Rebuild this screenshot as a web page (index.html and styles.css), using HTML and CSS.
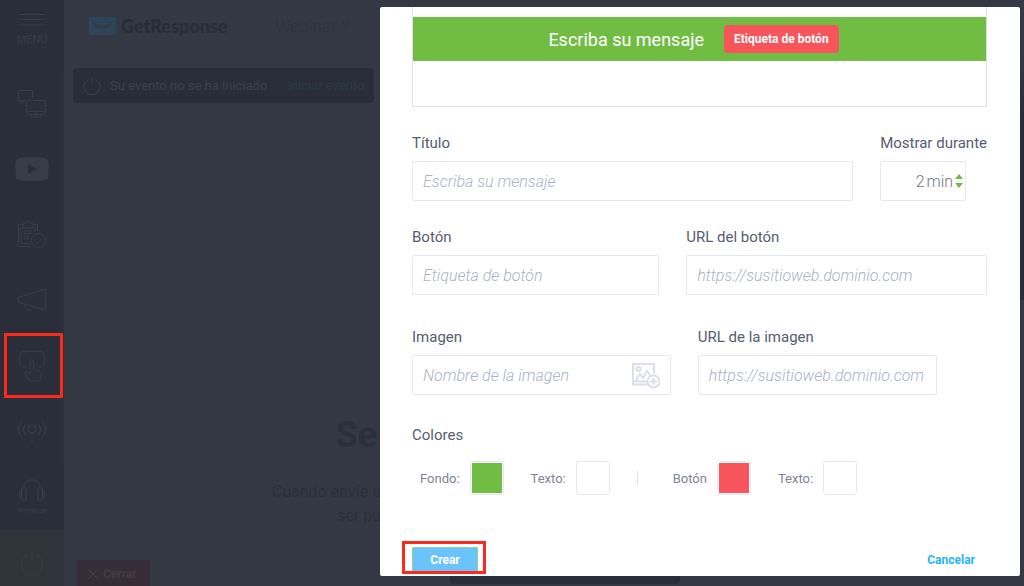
FILE: index.html
```html
<!DOCTYPE html>
<html lang="es">
<head>
<meta charset="UTF-8">
<meta name="viewport" content="width=device-width, initial-scale=1">
<title>GetResponse - Webinar</title>
<link rel="stylesheet" href="styles.css">
</head>

<body>
<div class="room">

  <aside class="sidebar">
    <button class="menu" type="button">
      <svg width="26" height="14" viewBox="0 0 26 14"><path d="M0 1.500h26M0 6.500h26M0 12h26"/></svg>
      MENÚ
    </button>

    <nav class="tools">
      <a href="#screen" aria-label="Pantalla">
        <svg width="30" height="30" viewBox="0 0 30 30"><path d="M8 11.500H1.500v-10h14V9M2 14h5M4 12v2M12 11.500h14.500a2 2 0 0 1 2 2v10a2 2 0 0 1-2 2h-15a2 2 0 0 1-2-2v-10a2 2 0 0 1 2-2zM9.500 22.500h19M19 23v5M13 28h12"/></svg>
      </a>
      <a href="#video" aria-label="Video">
        <svg class="solid" width="34" height="24" viewBox="0 0 34 24"><path d="M6 .5Q17-.5 28 .5q5 .5 5.500 5 .5 6.500 0 13-.5 4.500-5.500 5-11 1-22 0-5-.5-5.500-5-.5-6.500 0-13Q1 1 6 .5zM13 7v10l9-5z"/></svg>
      </a>
      <a href="#survey" aria-label="Encuesta">
        <svg width="30" height="30" viewBox="0 0 30 30"><path d="M6 4.500H1.500v22h12M16 4.500h4.500V11M6 8H4v15.500h9M16 7h2v5M6 3h3a2 2 0 0 1 4 0h3v5H6zM7 11h8M7 13.500h8M7 16h5M7 18.500h5"/><circle cx="21.500" cy="20.500" r="7"/><path d="M17.500 20.500l3 3 5-5.500"/></svg>
      </a>
      <a href="#announce" aria-label="Anuncio">
        <svg width="30" height="24" viewBox="0 0 30 24"><path d="M1 9.500L28.500 1v21L1 14zM8 16.500c-1 7 8 7 9 2.500"/></svg>
      </a>
      <a class="current" href="#cta" aria-label="Llamada a la acción">
        <svg width="26" height="32" viewBox="0 0 26 32"><path d="M7 17H4q-3-1-3-4V5q0-3 3-3.500h18q3 .5 3 3.500v8q0 3-3 4h-3"/><path d="M11 24V11.500q0-2 1.500-2t2 2V19l7 2.500q1.500.5 1 2.500l-1.500 7H11l-6-8q0-2 2-1.500z"/></svg>
      </a>
      <a href="#live" aria-label="En directo">
        <svg width="30" height="26" viewBox="0 0 30 26"><circle cx="15" cy="11" r="4"/><path d="M15 15v10M9 5q-5 6 0 12M21 5q5 6 0 12M5.500 1.500q-8 9.500 0 19M24.500 1.500q8 9.500 0 19"/></svg>
      </a>
    </nav>

    <a class="webinar" href="#webinar">
      <svg width="28" height="22" viewBox="0 0 28 22"><path d="M6 9C6-2 22-2 22 9M3.500 9H8v12H3.500zM20 9h4.500v12H20zM3.500 11L1 15l2.500 4M24.500 11l2.500 4-2.500 4"/></svg>
      Webinar
    </a>
    <a class="power" href="#exit" aria-label="Salir">
      <svg width="24" height="26" viewBox="0 0 24 26"><path d="M12 1v11M7.500 4a10.500 10.500 0 1 0 9 0"/></svg>
    </a>
  </aside>

  <main class="stage">
    <header class="topbar">
      <a class="brand" href="#home">
        <svg width="27" height="18" viewBox="0 0 27 18"><rect width="27" height="18" rx="1" fill="#2c4558"/><path d="M2.500 2c4 14 18 14 22 0-5 9-17 9-22 0z" fill="#353943"/></svg>
        GetResponse
      </a>
      <span class="title">Webinar Y</span>
    </header>

    <div class="notice">
      <svg width="18" height="20" viewBox="0 0 18 20"><path d="M9 1v7M5.500 3.500a8 8 0 1 0 7 0"/></svg>
      <span>Su evento no se ha iniciado</span>
      <a href="#start">Iniciar evento</a>
    </div>

    <div class="placeholder">
      <h1>Se</h1>
      <p>Cuando envíe u</p>
      <p>ser pu</p>
    </div>

    <button class="close" type="button">
      <svg width="12" height="12" viewBox="0 0 12 12"><path d="M1 1l10 10M11 1L1 11"/></svg>
      Cerrar
    </button>
  </main>
  <div class="chat"></div>
  <div class="controls"></div>

  <form class="dialog">
    <div class="preview">
      <div class="strip">
        <span>Escriba su mensaje</span>
        <button type="button">Etiqueta de botón</button>
      </div>
    </div>

    <div class="row">
      <div class="field grow">
        <label for="heading">Título</label>
        <input id="heading" type="text" placeholder="Escriba su mensaje">
      </div>
      <div class="field">
        <label for="minutes">Mostrar durante</label>
        <div class="duration">
          <input id="minutes" type="text" value="2">
          <span>min</span>
          <svg width="8" height="14" viewBox="0 0 8 14"><path d="M0 5l4-5 4 5zM0 9h8l-4 5z"/></svg>
        </div>
      </div>
    </div>

    <div class="row">
      <div class="field button-name">
        <label for="button">Botón</label>
        <input id="button" type="text" placeholder="Etiqueta de botón">
      </div>
      <div class="field grow">
        <label for="button-url">URL del botón</label>
        <input id="button-url" type="text" placeholder="https://susitioweb.dominio.com">
      </div>
    </div>

    <div class="row spaced">
      <div class="field image-name">
        <label for="image">Imagen</label>
        <div class="picker">
          <input id="image" type="text" placeholder="Nombre de la imagen">
          <svg width="28" height="26" viewBox="0 0 28 26"><path d="M15 21.500H1V1h21v10M1 18.500h14M4 17l4-6 3 4 4-7 4 5"/><circle cx="6.500" cy="6" r="2"/><circle cx="21.500" cy="18.500" r="6"/><path d="M21.500 15v7M18 18.500h7"/></svg>
        </div>
      </div>
      <div class="field image-url">
        <label for="image-url">URL de la imagen</label>
        <input id="image-url" type="text" placeholder="https://susitioweb.dominio.com">
      </div>
    </div>

    <fieldset class="colors">
      <legend>Colores</legend>
      <div class="swatches">
        <label>Fondo: <input type="color" value="#71bd44"></label>
        <label>Texto: <input type="color" value="#ffffff"></label>
        <i class="divider"></i>
        <label>Botón <input type="color" value="#f7545b"></label>
        <label>Texto: <input type="color" value="#ffffff"></label>
      </div>
    </fieldset>

    <div class="actions">
      <div class="marked"><button class="create" type="submit">Crear</button></div>
      <a href="#cancel">Cancelar</a>
    </div>
  </form>

</div>
</body>
</html>
```
FILE: styles.css
```css
* {
    box-sizing: border-box;
}
body {
    margin: 0;
    background: #343842;
    font-family: Roboto, sans-serif;
    font-size: 15px;
    color: #555d70;
}
a {
    text-decoration: none;
}
button, input {
    font-family: inherit;
}
svg {
    flex: none;
    fill: none;
    stroke: currentColor;
}

.room {
    position: relative;
    display: flex;
    height: 100vh;
    overflow: hidden;
}

/* left toolbar */
.sidebar {
    display: flex;
    flex-direction: column;
    width: 64px;
    background: #2a2e38;
    color: #383d48;
}
.sidebar a {
    color: inherit;
}
.menu {
    display: flex;
    flex-direction: column;
    align-items: center;
    gap: 6px;
    height: 71px;
    padding: 13px 0 0;
    border: 0;
    background: none;
    color: #383d48;
    font-size: 11px;
    line-height: 14px;
}
.tools {
    display: flex;
    flex: 1;
    flex-direction: column;
    border-right: 4px solid #2c303b;
}
.tools a {
    display: flex;
    flex: 1;
    align-items: center;
    justify-content: center;
    padding-left: 4px;
}
.tools .solid {
    fill: #383c46;
    fill-rule: evenodd;
    stroke: none;
}
/* red marker round the active tool */
.current {
    position: relative;
}
.current::after {
    content: "";
    position: absolute;
    inset: 0 -3px 1px 4px;
    border: 3px solid #fb2a1c;
}
.webinar {
    display: flex;
    flex-direction: column;
    align-items: center;
    gap: 5px;
    height: 66px;
    padding-top: 15px;
    font-size: 8px;
    line-height: 9px;
}
.power {
    display: flex;
    justify-content: center;
    height: 56px;
    padding-top: 21px;
    background: #2d353b;
}

/* dimmed event room */
.stage {
    display: flex;
    flex: 1;
    flex-direction: column;
    align-items: flex-start;
    padding-left: 9px;
}
.topbar {
    display: flex;
    align-items: center;
    gap: 48px;
    height: 52px;
    margin-bottom: 16px;
    padding-left: 16px;
}
.brand {
    display: flex;
    align-items: center;
    gap: 5px;
    color: #282c36;
    font-family: Lato, sans-serif;
    font-size: 18px;
    font-weight: 900;
}
.brand svg {
    stroke: none;
}
.title {
    color: #2e323c;
    font-size: 17px;
    font-weight: 300;
}
.notice {
    display: flex;
    align-items: center;
    gap: 9px;
    height: 35px;
    padding: 0 9px 0 10px;
    border-radius: 4px;
    background: #292d37;
    color: #3c414c;
    font-size: 13px;
}
.notice a {
    margin-left: 11px;
    color: #283b4b;
}
.placeholder {
    display: flex;
    flex: 1;
    flex-direction: column;
    align-items: flex-end;
    width: 308px;
    padding-top: 311px;
    color: #2b2f39;
}
.placeholder h1 {
    margin: 0 4px 24px 0;
    font-size: 36px;
    line-height: 42px;
}
.placeholder p {
    margin: 0;
    font-size: 16px;
    line-height: 24px;
}
.close {
    display: flex;
    flex: none;
    align-items: center;
    gap: 4px;
    height: 26px;
    margin-left: 4px;
    padding: 2px 13px 0 10px;
    border: 0;
    border-radius: 2px 2px 0 0;
    background: #372d39;
    color: #443b46;
    font-size: 12px;
    font-weight: 700;
}
.chat {
    width: 4px;
    height: 300px;
    background: linear-gradient(#343842 20%, #292d37 40%);
}
.controls {
    position: absolute;
    bottom: 2px;
    left: 450px;
    width: 230px;
    height: 30px;
    border-radius: 4px;
    background: #292d37;
}

/* call to action dialog */
.dialog {
    position: absolute;
    top: 7px;
    right: 4px;
    width: 62.5%;
    padding: 0 33px 2px 32px;
    border-radius: 2px;
    background: #fff;
}
.preview {
    padding: 10px 0 45px;
    border: 1px solid #dfe1ea;
    border-top: 0;
}
.strip {
    display: flex;
    align-items: center;
    justify-content: center;
    gap: 20px;
    height: 44px;
    padding-right: 12px;
    background: #71bd44;
    color: #fff;
    font-size: 18px;
}
.strip button {
    height: 28px;
    padding: 0 10px;
    border: 0;
    border-radius: 4px;
    background: #f7545b;
    color: #fff;
    font-size: 12px;
    font-weight: 700;
}

.row {
    display: flex;
    gap: 27px;
    margin-top: 26px;
}
.spaced {
    margin-top: 32px;
}
.field label, .colors legend {
    display: block;
    margin-bottom: 8px;
    padding: 0;
    line-height: 20px;
}
.field input, .duration {
    width: 100%;
    height: 40px;
    padding: 0 10px;
    border: 1px solid #e6e8f0;
    border-radius: 2px;
    background: #fff;
    font-size: 16px;
}
.field input::placeholder {
    color: #aab1c9;
    font-style: italic;
    font-weight: 300;
    opacity: 1;
}
.grow {
    flex: 1;
}
.button-name {
    width: 43%;
}
.image-name {
    width: 45%;
}
.image-url {
    width: 239px;
}
.duration {
    display: flex;
    align-items: center;
    gap: 2px;
    width: 86px;
    padding: 0 2px;
    color: #6f7587;
    font-weight: 300;
}
.duration input {
    flex: 1;
    min-width: 0;
    height: 30px;
    padding: 0;
    border: 0;
    color: inherit;
    font-weight: inherit;
    text-align: right;
}
.duration svg {
    fill: #71bd44;
    stroke: none;
}
.picker {
    position: relative;
}
.picker svg {
    position: absolute;
    top: 8px;
    right: 11px;
    color: #dcdfe9;
    stroke-width: 2;
}

.colors {
    margin: 30px 0 0;
    padding: 0;
    border: 0;
}
.swatches {
    display: flex;
    align-items: center;
    padding: 8px 0 0 8px;
    color: #7e8494;
    font-size: 13px;
}
.swatches label {
    display: flex;
    align-items: center;
    gap: 10px;
    margin-right: 27px;
}
.swatches input {
    appearance: none;
    width: 34px;
    height: 34px;
    padding: 1px;
    border: 1px solid #e6e7ef;
    border-radius: 3px;
    background: #fff;
}
.swatches input::-webkit-color-swatch-wrapper {
    padding: 0;
}
.swatches input::-webkit-color-swatch {
    border: 0;
}
.divider {
    width: 1px;
    height: 14px;
    margin-right: 35px;
    background: #e2e4ec;
}

.actions {
    display: flex;
    align-items: center;
    justify-content: space-between;
    margin-top: 46px;
    padding-right: 12px;
    font-size: 12px;
    font-weight: 700;
}
.actions a {
    padding-top: 4px;
    color: #1fb6fa;
}
/* red marker round the submit button */
.marked {
    margin-left: -10px;
    padding: 3px 5px 0 7px;
    border: 3px solid #fb2a1c;
}
.create {
    display: block;
    width: 66px;
    height: 24px;
    border: 1px solid #8fcfa0;
    border-bottom: 0;
    border-radius: 2px 2px 0 0;
    background: #6bc3fb;
    color: #fff;
    font-size: 12px;
    font-weight: 700;
}
```
